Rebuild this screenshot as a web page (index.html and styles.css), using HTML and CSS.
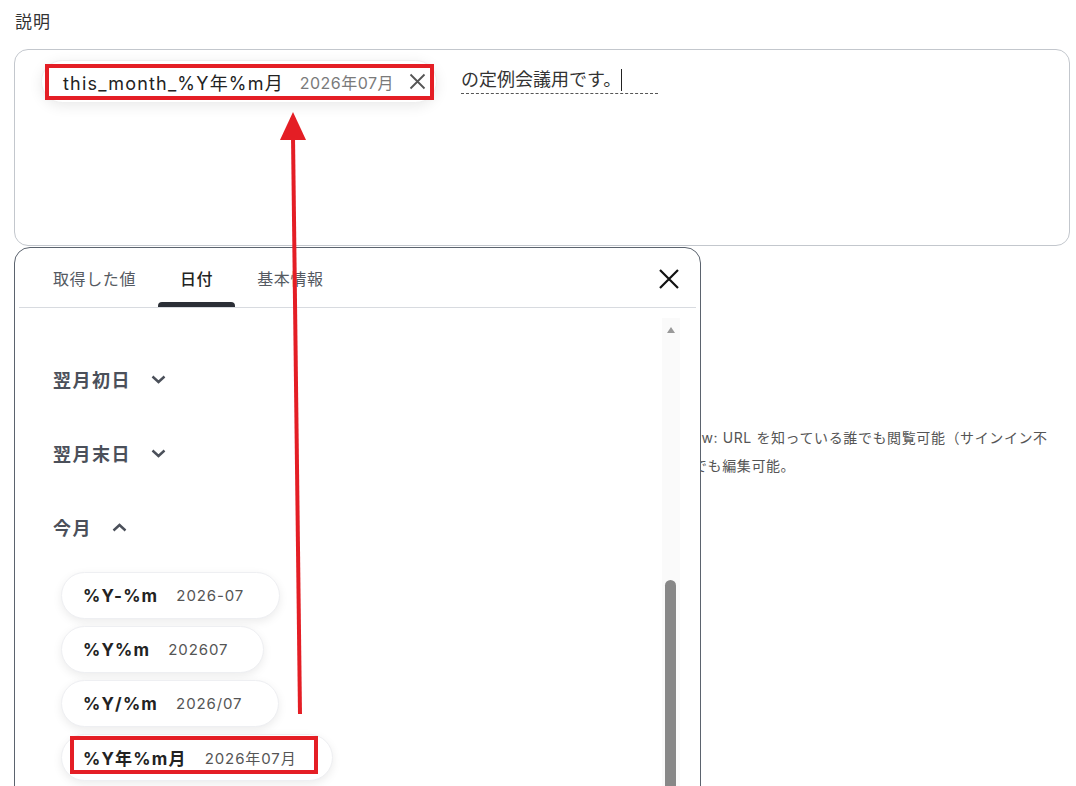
FILE: index.html
```html
<!DOCTYPE html>
<html lang="ja">
<head>
  <meta charset="UTF-8">
  <meta name="viewport" content="width=device-width, initial-scale=1.0">
  <title>説明 - 変数の挿入</title>
  <link rel="stylesheet" href="styles.css">
</head>
<body>
  <div class="page">
    <label class="field-label">説明</label>
    <div class="editor">
      <span class="chip">
        <span class="chip-key">this_month_%Y年%m月</span>
        <span class="chip-val">2026年07月</span>
        <svg class="chip-close" width="17" height="17" viewBox="0 0 17 17"><path d="M1.5 1.5 L15.5 15.5 M15.5 1.5 L1.5 15.5" stroke="#555" stroke-width="1.8" fill="none"/></svg>
      </span>
      <span class="typed">の定例会議用です。<span class="caret"></span></span>
    </div>

    <div class="help">
      <div>ew: URL を知っている誰でも閲覧可能（サインイン不</div>
      <div>でも編集可能。</div>
    </div>

    <!-- 変数ピッカー -->
    <div class="picker">
      <div class="picker-head">
        <div class="tabs">
          <div class="tab">取得した値</div>
          <div class="tab active">日付</div>
          <div class="tab">基本情報</div>
        </div>
        <svg class="picker-close" width="20" height="20" viewBox="0 0 20 20"><path d="M1 1 L19 19 M19 1 L1 19" stroke="#111" stroke-width="2.2" fill="none"/></svg>
      </div>
      <div class="picker-body">
        <div class="groups">
          <div class="group-title">翌月初日
            <svg class="chev" width="15" height="9" viewBox="0 0 15 9"><path d="M1.5 1.5 L7.5 7 L13.5 1.5" stroke="#4b505a" stroke-width="2.4" fill="none"/></svg>
          </div>
          <div class="group-title">翌月末日
            <svg class="chev" width="15" height="9" viewBox="0 0 15 9"><path d="M1.5 1.5 L7.5 7 L13.5 1.5" stroke="#4b505a" stroke-width="2.4" fill="none"/></svg>
          </div>
          <div class="group-title">今月
            <svg class="chev" width="15" height="9" viewBox="0 0 15 9"><path d="M1.5 7.5 L7.5 2 L13.5 7.5" stroke="#4b505a" stroke-width="2.4" fill="none"/></svg>
          </div>
          <div class="options">
            <div class="option"><span class="opt-key">%Y-%m</span><span class="opt-val">2026-07</span></div>
            <div class="option"><span class="opt-key">%Y%m</span><span class="opt-val">202607</span></div>
            <div class="option"><span class="opt-key">%Y/%m</span><span class="opt-val">2026/07</span></div>
            <div class="option"><span class="opt-key">%Y年%m月</span><span class="opt-val">2026年07月</span></div>
          </div>
        </div>
        <div class="scrollbar">
          <span class="scroll-up"></span>
          <span class="scroll-thumb"></span>
        </div>
      </div>
    </div>

    <!-- 注釈 -->
    <svg class="notes" width="1076" height="786" viewBox="0 0 1076 786">
      <rect x="47" y="66" width="385" height="32" fill="none" stroke="#e41e25" stroke-width="4"/>
      <rect x="72" y="738" width="244" height="34" fill="none" stroke="#e41e25" stroke-width="4"/>
      <line x1="300" y1="714" x2="293" y2="136" stroke="#e41e25" stroke-width="4"/>
      <polygon points="293,112 280,140 306,140" fill="#e41e25"/>
    </svg>
  </div>
</body>
</html>
```

FILE: styles.css
```css
body {
  margin: 0;
  font-family: Inter, "Noto Sans CJK JP", sans-serif;
  color: #333;
  background: #fff;
  overflow: hidden;
}

.page {
  position: relative;
  width: 1076px;
  height: 786px;
  padding: 0 6px 0 14px;
  box-sizing: border-box;
}

.field-label {
  display: block;
  padding-top: 10px;
  font-size: 17px;
  line-height: 24px;
  margin-bottom: 15px;
  color: #333;
  padding-left: 1px;
  letter-spacing: 1px;
}

.editor {
  height: 197px;
  border: 1px solid #c3c7cd;
  border-radius: 14px;
  box-sizing: border-box;
  padding: 10px 26px;
  display: flex;
  align-items: flex-start;
  gap: 24px;
}

.chip {
  display: inline-flex;
  align-items: center;
  flex-shrink: 0;
  height: 43px;
  width: 396px;
  padding: 0 10px 0 21px;
  border-radius: 22px;
  background: #fff;
  border: 1px solid #efefef;
  box-shadow: 0 3px 14px rgba(0, 0, 0, 0.09);
  box-sizing: border-box;
  white-space: nowrap;
}

.chip-key {
  font-size: 18px;
  letter-spacing: 1.2px;
  color: #222;
}

.chip-val {
  font-size: 16px;
  letter-spacing: 0.5px;
  color: #7a7a7a;
  margin-left: auto;
}

.chip-close {
  margin-left: 15px;
}

.typed {
  position: relative;
  margin-top: 7px;
  width: 197px;
  font-size: 18px;
  line-height: 26px;
  color: #333;
  border-bottom: 1px dashed #555;
  white-space: nowrap;
}

.caret {
  display: inline-block;
  width: 1px;
  height: 22px;
  background: #222;
  vertical-align: -5px;
}

.help {
  padding: 178px 0 0 679px;
  font-size: 14px;
  line-height: 28px;
  letter-spacing: 0.6px;
  color: #555;
  white-space: nowrap;
}

.picker {
  position: absolute;
  left: 14px;
  top: 247px;
  width: 687px;
  height: 560px;
  box-sizing: border-box;
  background: #fff;
  border: 1px solid #5b636e;
  border-radius: 16px;
}

.picker-head {
  display: flex;
  align-items: flex-start;
  justify-content: space-between;
  margin: 0 4px;
  padding-left: 12px;
  border-bottom: 1px solid #d8dbe0;
}

.tabs {
  display: flex;
}

.tab {
  padding: 20px 22px 0;
  font-size: 16px;
  line-height: 22px;
  letter-spacing: 0.6px;
  color: #555a62;
  height: 59px;
  box-sizing: border-box;
  position: relative;
}

.tab.active {
  color: #222;
  font-weight: 500;
}

.tab.active::after {
  content: "";
  position: absolute;
  left: 0;
  right: 0;
  bottom: 0;
  height: 5px;
  background: #2b2f36;
  border-radius: 4px 4px 0 0;
}

.picker-close {
  margin: 21px 17px 0 0;
}

.picker-body {
  display: flex;
  justify-content: space-between;
  padding-top: 10px;
}

.groups {
  padding: 24px 0 0 38px;
}

.group-title {
  display: flex;
  align-items: center;
  gap: 20px;
  height: 74px;
  font-size: 18px;
  font-weight: 600;
  letter-spacing: 1.5px;
  color: #4b505a;
}

.options {
  display: flex;
  flex-direction: column;
  align-items: flex-start;
  gap: 7px;
  padding: 8px 0 0 8px;
}

.option {
  display: flex;
  align-items: center;
  gap: 18px;
  height: 47px;
  padding: 0 35px 0 21px;
  border-radius: 24px;
  background: #fff;
  border: 1px solid #eeeff2;
  box-shadow: 0 3px 10px rgba(0, 0, 0, 0.08);
  box-sizing: border-box;
  white-space: nowrap;
}

.opt-key {
  font-size: 17px;
  font-weight: 700;
  letter-spacing: 1.2px;
  color: #222;
}

.opt-val {
  font-size: 15px;
  letter-spacing: 0.9px;
  color: #555;
}

.scrollbar {
  position: relative;
  width: 18px;
  height: 480px;
  margin-right: 20px;
  background: #fafafa;
}

.scroll-up {
  position: absolute;
  left: 5px;
  top: 9px;
  border-left: 4px solid transparent;
  border-right: 4px solid transparent;
  border-bottom: 6px solid #999;
}

.scroll-thumb {
  position: absolute;
  left: 3px;
  top: 262px;
  width: 11px;
  height: 220px;
  border-radius: 6px;
  background: #888;
}

.notes {
  position: absolute;
  left: 0;
  top: 0;
  pointer-events: none;
}
```
